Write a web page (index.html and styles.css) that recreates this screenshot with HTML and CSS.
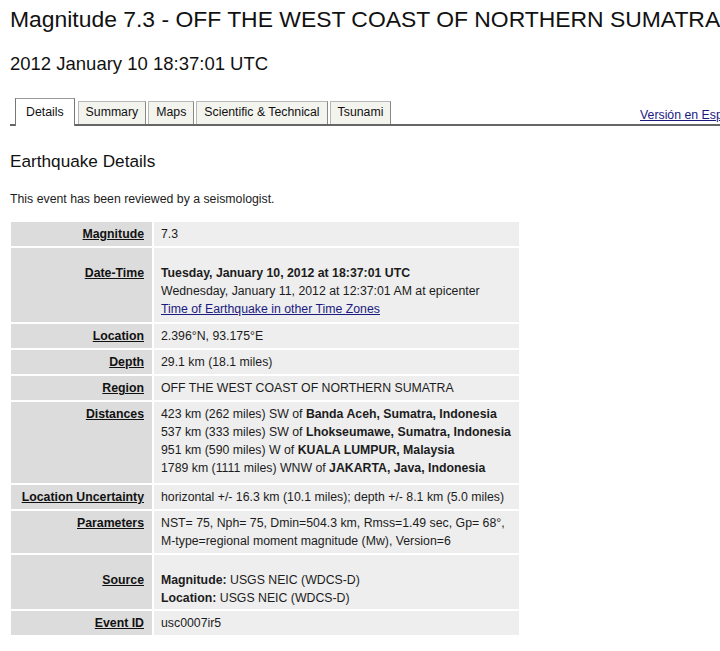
FILE: index.html
```html
<!DOCTYPE html>
<html lang="en">

<head>
  <meta charset="UTF-8" />
  <title>Magnitude 7.3 - OFF THE WEST COAST OF NORTHERN SUMATRA</title>
  <link rel="stylesheet" href="styles.css">
</head>

<body>
  <h1 class="title">Magnitude 7.3 - OFF THE WEST COAST OF NORTHERN SUMATRA</h1>
  <h2 class="subtitle">2012 January 10 18:37:01 UTC</h2>

  <div class="tabs">
    <a class="tab active" href="#">Details</a>
    <a class="tab" href="#">Summary</a>
    <a class="tab" href="#">Maps</a>
    <a class="tab" href="#">Scientific &amp; Technical</a>
    <a class="tab" href="#">Tsunami</a>
    <a class="lang" href="#">Versión en Español</a>
  </div>

  <h3 class="section-title">Earthquake Details</h3>
  <p class="note">This event has been reviewed by a seismologist.</p>

  <table class="details">
    <tr>
      <th><a href="#">Magnitude</a></th>
      <td>7.3</td>
    </tr>
    <tr>
      <th class="spaced"><a href="#">Date-Time</a></th>
      <td class="spaced">
        <b>Tuesday, January 10, 2012 at 18:37:01 UTC</b><br>
        Wednesday, January 11, 2012 at 12:37:01 AM at epicenter<br>
        <a class="blue" href="#">Time of Earthquake in other Time Zones</a>
      </td>
    </tr>
    <tr>
      <th><a href="#">Location</a></th>
      <td>2.396°N, 93.175°E</td>
    </tr>
    <tr>
      <th><a href="#">Depth</a></th>
      <td>29.1 km (18.1 miles)</td>
    </tr>
    <tr>
      <th><a href="#">Region</a></th>
      <td>OFF THE WEST COAST OF NORTHERN SUMATRA</td>
    </tr>
    <tr>
      <th><a href="#">Distances</a></th>
      <td class="tall">
        423 km (262 miles) SW of <b>Banda Aceh, Sumatra, Indonesia</b><br>
        537 km (333 miles) SW of <b>Lhokseumawe, Sumatra, Indonesia</b><br>
        951 km (590 miles) W of <b>KUALA LUMPUR, Malaysia</b><br>
        1789 km (1111 miles) WNW of <b>JAKARTA, Java, Indonesia</b>
      </td>
    </tr>
    <tr>
      <th><a href="#">Location Uncertainty</a></th>
      <td>horizontal +/- 16.3 km (10.1 miles); depth +/- 8.1 km (5.0 miles)</td>
    </tr>
    <tr>
      <th><a href="#">Parameters</a></th>
      <td>NST= 75, Nph= 75, Dmin=504.3 km, Rmss=1.49 sec, Gp= 68°,<br>
        M-type=regional moment magnitude (Mw), Version=6</td>
    </tr>
    <tr>
      <th class="spaced source"><a href="#">Source</a></th>
      <td class="spaced source">
        <b>Magnitude:</b> USGS NEIC (WDCS-D)<br>
        <b>Location:</b> USGS NEIC (WDCS-D)
      </td>
    </tr>
    <tr>
      <th><a href="#">Event ID</a></th>
      <td>usc0007ir5</td>
    </tr>
  </table>
</body>

</html>
```

FILE: styles.css
```css
* {
  box-sizing: border-box;
  margin: 0;
  padding: 0;
}

html {
  overflow: hidden;
}

body {
  font-family: 'Liberation Sans', Arial, sans-serif;
  font-size: 12.3px;
  line-height: 18px;
  color: #1c1c1c;
  background: #fff;
  padding: 0 10px;
}

.title {
  font-size: 22.9px;
  font-weight: normal;
  line-height: 28px;
  margin-top: 5px;
  white-space: nowrap;
  color: #111;
}

.subtitle {
  font-size: 18.5px;
  font-weight: normal;
  line-height: 24px;
  margin-top: 19px;
  color: #111;
}

.tabs {
  display: flex;
  align-items: flex-end;
  gap: 2px;
  width: 736px;
  margin-top: 22px;
  border-bottom: 2px solid #666;
}

.tab {
  display: block;
  padding: 0 7px;
  height: 23px;
  line-height: 21px;
  background: #f4f4ee;
  border: 1px solid #b8b8b8;
  border-right-color: #888;
  border-bottom: none;
  color: #111;
  text-decoration: none;
}

.tab.active {
  margin-left: 5px;
  margin-bottom: -2px;
  margin-right: 1px;
  height: 28px;
  padding: 0 10px;
  line-height: 26px;
  background: #fff;
  border-color: #999;
  border-left-color: #777;
  border-right-color: #777;
}

.lang {
  margin-left: auto;
  color: #1a1a80;
}

.section-title {
  font-size: 17.2px;
  font-weight: normal;
  line-height: 22px;
  margin-top: 24px;
  color: #111;
}

.note {
  margin-top: 18px;
}

.details {
  margin-top: 12px;
  margin-left: -1px;
  border-spacing: 2px;
  table-layout: fixed;
  width: 512px;
}

.details th,
.details td {
  vertical-align: baseline;
  padding: 3px 7px 3px 7px;
}

.details th {
  width: 141px;
  text-align: right;
  padding-right: 8px;
  background: #dcdcdc;
  white-space: nowrap;
}

.details th a {
  color: #111;
}

.details td {
  background: #eeeeee;
}

.details .spaced {
  padding-top: 16px;
  padding-bottom: 4px;
}

.details .source {
  padding-bottom: 2px;
}

.details .tall {
  padding-bottom: 6px;
}

.blue {
  color: #1a1a80;
}
```
